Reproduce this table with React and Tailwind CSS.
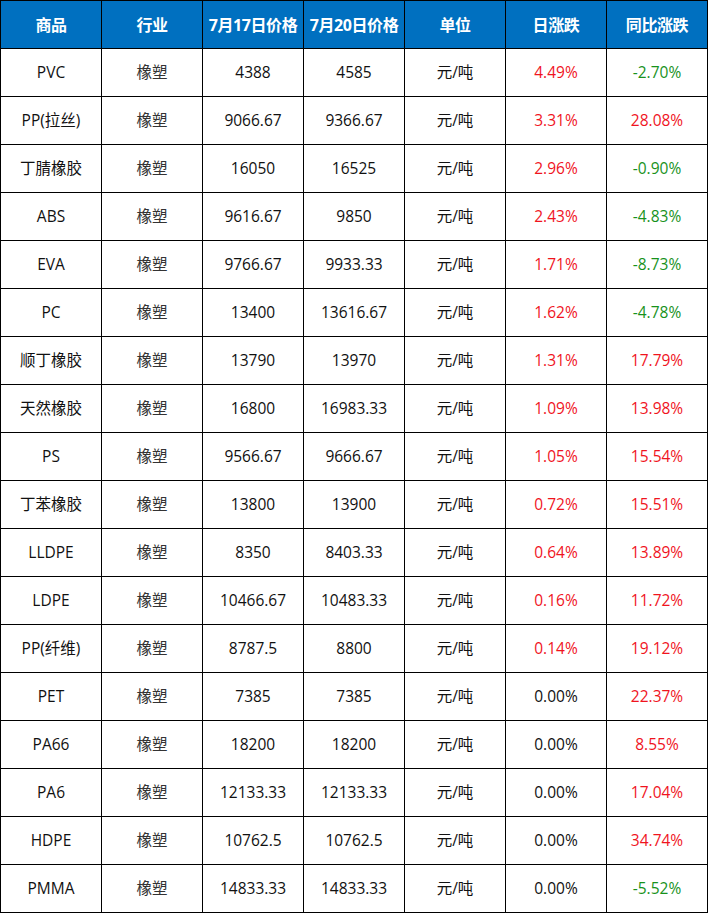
const headers = ["商品", "行业", "7月17日价格", "7月20日价格", "单位", "日涨跌", "同比涨跌"];

const rows = [
  ["PVC", "4388", "4585", "4.49%", "-2.70%"],
  ["PP(拉丝)", "9066.67", "9366.67", "3.31%", "28.08%"],
  ["丁腈橡胶", "16050", "16525", "2.96%", "-0.90%"],
  ["ABS", "9616.67", "9850", "2.43%", "-4.83%"],
  ["EVA", "9766.67", "9933.33", "1.71%", "-8.73%"],
  ["PC", "13400", "13616.67", "1.62%", "-4.78%"],
  ["顺丁橡胶", "13790", "13970", "1.31%", "17.79%"],
  ["天然橡胶", "16800", "16983.33", "1.09%", "13.98%"],
  ["PS", "9566.67", "9666.67", "1.05%", "15.54%"],
  ["丁苯橡胶", "13800", "13900", "0.72%", "15.51%"],
  ["LLDPE", "8350", "8403.33", "0.64%", "13.89%"],
  ["LDPE", "10466.67", "10483.33", "0.16%", "11.72%"],
  ["PP(纤维)", "8787.5", "8800", "0.14%", "19.12%"],
  ["PET", "7385", "7385", "0.00%", "22.37%"],
  ["PA66", "18200", "18200", "0.00%", "8.55%"],
  ["PA6", "12133.33", "12133.33", "0.00%", "17.04%"],
  ["HDPE", "10762.5", "10762.5", "0.00%", "34.74%"],
  ["PMMA", "14833.33", "14833.33", "0.00%", "-5.52%"],
];

function changeColor(v) {
  if (v === "0.00%") return "text-[#111111]";
  return v.startsWith("-") ? "text-[#18921c]" : "text-[#f0141e]";
}

export default function App() {
  return (
    <div
      className="w-[708px] h-[913px] bg-black p-px grid grid-cols-[repeat(7,100px)] auto-rows-[47px] gap-px text-[15.5px]"
      style={{ fontFamily: '"Open Sans", "Noto Sans CJK SC", sans-serif' }}
    >
      {headers.map((h) => (
        <div
          key={h}
          className="bg-[#0070c0] text-white font-bold text-[16px] flex items-center justify-center whitespace-nowrap tracking-[-0.4px]"
        >
          {h}
        </div>
      ))}
      {rows.map(([name, p1, p2, day, yoy]) => (
        <div key={name} className="contents">
          <div className="bg-white text-[#111111] flex items-center justify-center">{name}</div>
          <div className="bg-white text-[#333333] flex items-center justify-center">橡塑</div>
          <div className="bg-white text-[#111111] flex items-center justify-center">{p1}</div>
          <div className="bg-white text-[#111111] flex items-center justify-center">{p2}</div>
          <div className="bg-white text-[#111111] flex items-center justify-center">元/吨</div>
          <div className={`bg-white flex items-center justify-center ${changeColor(day)}`}>{day}</div>
          <div className={`bg-white flex items-center justify-center ${changeColor(yoy)}`}>{yoy}</div>
        </div>
      ))}
    </div>
  );
}
